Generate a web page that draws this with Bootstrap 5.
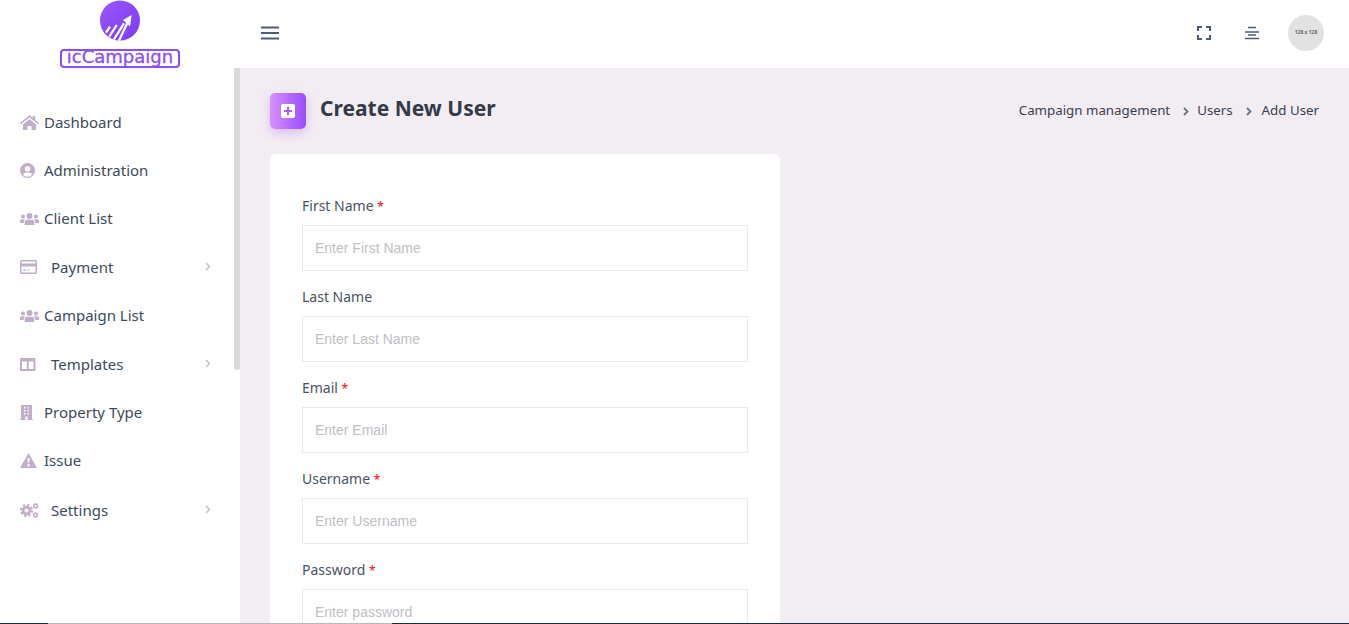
<!DOCTYPE html>
<html lang="en">
<head>
  <meta charset="UTF-8">
  <title>Create New User</title>
  <link href="https://cdn.jsdelivr.net/npm/bootstrap@5.3.0/dist/css/bootstrap.min.css" rel="stylesheet">
  <style>
    html, body { height: 100%; overflow: hidden; }
    body { font-family: "Noto Sans", "Open Sans", sans-serif; color: #3d4a5c; background: #f2ecf3; }
    .topbar { height: 68px; background: #fff; padding-bottom: 2px; }
    .brand-box { width: 240px; }
    .brand-name { font-family: "DejaVu Sans", sans-serif; font-size: 18px; line-height: 11px; height: 19px; color: #8a4dfb; -webkit-text-stroke: .3px #8a4dfb; border: 2px solid #8a4dfb; border-radius: 4px; width: 120px; text-align: center; margin-top: 8px; }
    .burger { margin-left: 21px; color: #4f5b7c; }
    .head-icon { color: #4f5b7c; }
    .head-icon-mid { margin: 0 29px 0 34px; }
    .avatar-blank { width: 36px; height: 36px; border-radius: 50%; background: #e2e2e2; color: #666; font-size: 5px; font-weight: 700; margin-right: 25px; }
    .side-menu { width: 240px; height: 556px; background: #fff; padding-top: 30px; position: relative; }
    .side-item { height: 48px; padding-left: 20px; padding-right: 29px; color: #3d4a5c; font-size: 15px; text-decoration: none; }
    .side-item-sub { height: 49px; padding-top: 1px; }
    .side-item-last { margin-top: 1px; }
    .side-item svg.ico { color: #c3aec9; flex: none; }
    .side-chev { margin-top: -2px; }
    .side-label { margin-left: 5px; }
    .side-label-sub { margin-left: 12px; }
    .side-thumb { position: absolute; right: 0; top: 0; width: 6px; height: 302px; background: #d7d9dc; border-radius: 0 0 3px 3px; }
    .content-area { padding: 25px 30px 0; }
    .page-badge { width: 36px; height: 36px; border-radius: 5px; background: linear-gradient(90deg, #d78fff, #9a4dff); box-shadow: 0 4px 10px rgba(168, 85, 247, .3); }
    .page-title { font-size: 21px; font-weight: 700; color: #343a46; margin: 0 0 6px 14px; line-height: 30px; }
    .crumbs { font-size: 13.3px; color: #3a3f4d; }
    .crumbs svg { color: #6c7280; margin: 0 8px 0 13px; }
    .crumbs svg:last-of-type { margin-right: 10px; }
    .form-panel { width: 510px; background: #fff; border-radius: 6px; padding: 40px 32px 0; margin-top: 25px; }
    .field-label { font-size: 14px; color: #4a5262; line-height: 24px; margin-bottom: 7px; display: block; }
    .field-label b { color: #f00; font-weight: 400; font-size: 12px; line-height: 1; }
    .field-input { height: 46px; border: 1px solid #e8e8ef; border-radius: 0; font-family: "Liberation Sans", sans-serif; font-size: 14px; padding: 0 12px; margin-bottom: 14px; }
    .field-input::placeholder { color: #c0c0c4; }
    .edge-line { position: fixed; left: 0; right: 0; bottom: 0; height: 1px; background: #1f2d3a; }
    .edge-line i { display: block; margin-left: 48px; width: 344px; height: 1px; background: #b8b8b8; }
  </style>
</head>
<body>
<div class="topbar d-flex align-items-center">
  <div class="brand-box d-flex flex-column align-items-center align-self-start">
    <svg width="40" height="41" viewBox="0 0 40 41">
      <defs><linearGradient id="lg" x1="0" y1="0" x2="1" y2="1"><stop offset="0" stop-color="#9a55fb"/><stop offset="1" stop-color="#7a3df5"/></linearGradient></defs>
      <circle cx="20" cy="20.500" r="20" fill="url(#lg)"/>
      <path d="M6 32.700l4-6M9.300 36.700L16.700 25M14 39.300l10-16M19 40.500l10-21" stroke="#fff" stroke-width="2.200" fill="none"/>
      <path d="M31.600 15L23 20l7 6.600z" fill="#fff"/>
    </svg>
    <div class="brand-name">icCampaign</div>
  </div>
  <svg class="burger" width="18" height="14" viewBox="0 0 18 14"><path d="M0 1.500h18M0 7h18M0 12.500h18" stroke="currentColor" stroke-width="2"/></svg>
  <div class="ms-auto d-flex align-items-center">
    <svg class="head-icon" width="14" height="14" viewBox="0 0 14 14"><path d="M1 5V1h4M9 1h4v4M13 9v4H9M5 13H1V9" fill="none" stroke="currentColor" stroke-width="2"/></svg>
    <svg class="head-icon head-icon-mid" width="14" height="14" viewBox="0 0 14 14"><path d="M3 1.500h8M0 6h14M3 9h8M0 12.500h14" stroke="currentColor" stroke-width="1.700"/></svg>
    <div class="avatar-blank d-flex align-items-center justify-content-center">128 x 128</div>
  </div>
</div>
<div class="d-flex">
  <nav class="side-menu flex-shrink-0">
    <div class="side-thumb"></div>
    <a href="#" class="side-item d-flex align-items-center">
      <svg class="ico" width="19" height="15" viewBox="0 0 19 15"><path fill="currentColor" d="M9.500 0l3.300 2.800V1h2.500v3.900L19 8l-1 1.200-8.500-7-8.500 7L0 8zM3 9.500l6.500-5.500L16 9.500V15h-4.500v-4h-4v4H3z"/></svg>
      <span class="side-label">Dashboard</span>
    </a>
    <a href="#" class="side-item d-flex align-items-center">
      <svg class="ico" width="19" height="15" viewBox="0 0 19 15"><path fill="currentColor" fill-rule="evenodd" d="M7.500 0a7.500 7.500 0 1 1 0 15a7.500 7.500 0 0 1 0-15zM7.500 3a2.700 2.700 0 1 0 0 5.400a2.700 2.700 0 0 0 0-5.400zM2.900 11.500a5.800 5.800 0 0 0 9.200 0c-.8-1.300-2-2-3.300-2h-2.600c-1.300 0-2.500.7-3.300 2z"/></svg>
      <span class="side-label">Administration</span>
    </a>
    <a href="#" class="side-item d-flex align-items-center">
      <svg class="ico" width="19" height="13" viewBox="0 0 19 13"><path fill="currentColor" d="M9.500 1a3 3 0 1 1 0 6a3 3 0 0 1 0-6zM3 2.500a2 2 0 1 1 0 4a2 2 0 0 1 0-4zM16 2.500a2 2 0 1 1 0 4a2 2 0 0 1 0-4zM0 11V9c0-1 .8-1.800 2-1.800h2c.3 0 .7.100 1 .3C4.200 8.300 3.700 9.500 3.700 11zM19 11V9c0-1-.8-1.800-2-1.800h-2c-.3 0-.7.100-1 .3c.8.800 1.300 2 1.300 3.500zM7 7.700h5c1.300 0 2.300 1 2.300 2.300v3H4.700v-3c0-1.300 1-2.300 2.300-2.300z"/></svg>
      <span class="side-label">Client List</span>
    </a>
    <a href="#" class="side-item side-item-sub d-flex align-items-center">
      <svg class="ico" width="19" height="14" viewBox="0 0 19 14"><path fill="currentColor" fill-rule="evenodd" d="M1.500 0h14A1.500 1.500 0 0 1 17 1.500v11a1.500 1.500 0 0 1-1.500 1.500h-14A1.500 1.500 0 0 1 0 12.500v-11A1.500 1.500 0 0 1 1.500 0zM1.500 1.500V3.500h14V1.500zM1.500 6.500v6h14v-6zM3 9.500h3v1.300H3zM7.500 9.500h2v1.300h-2z"/></svg>
      <span class="side-label-sub">Payment</span>
      <svg class="side-chev ms-auto" width="6" height="9" viewBox="0 0 6 9"><path d="M1 1l3.500 3.500L1 8" fill="none" stroke="#c6b8cb" stroke-width="1.300"/></svg>
    </a>
    <a href="#" class="side-item d-flex align-items-center">
      <svg class="ico" width="19" height="13" viewBox="0 0 19 13"><path fill="currentColor" d="M9.500 1a3 3 0 1 1 0 6a3 3 0 0 1 0-6zM3 2.500a2 2 0 1 1 0 4a2 2 0 0 1 0-4zM16 2.500a2 2 0 1 1 0 4a2 2 0 0 1 0-4zM0 11V9c0-1 .8-1.800 2-1.800h2c.3 0 .7.100 1 .3C4.200 8.300 3.700 9.500 3.700 11zM19 11V9c0-1-.8-1.800-2-1.800h-2c-.3 0-.7.100-1 .3c.8.800 1.300 2 1.300 3.500zM7 7.700h5c1.300 0 2.300 1 2.300 2.300v3H4.700v-3c0-1.300 1-2.300 2.300-2.300z"/></svg>
      <span class="side-label">Campaign List</span>
    </a>
    <a href="#" class="side-item side-item-sub d-flex align-items-center">
      <svg class="ico" width="19" height="13" viewBox="0 0 19 13"><path fill="currentColor" fill-rule="evenodd" d="M0 0h15.500v13H0zM2 3.500V11h4.800V3.500zM8.700 3.500V11h4.800V3.500z"/></svg>
      <span class="side-label-sub">Templates</span>
      <svg class="side-chev ms-auto" width="6" height="9" viewBox="0 0 6 9"><path d="M1 1l3.500 3.500L1 8" fill="none" stroke="#c6b8cb" stroke-width="1.300"/></svg>
    </a>
    <a href="#" class="side-item d-flex align-items-center">
      <svg class="ico" width="19" height="15" viewBox="0 0 19 15"><path fill="currentColor" fill-rule="evenodd" d="M1 0h11v14h1v1H0v-1h1zM4 2v1.500h1.500V2zM7.500 2v1.500H9V2zM4 5v1.500h1.500V5zM7.500 5v1.500H9V5zM4 8v1.500h1.500V8zM7.500 8v1.500H9V8zM5.500 11.500V15h2v-3.500z"/></svg>
      <span class="side-label">Property Type</span>
    </a>
    <a href="#" class="side-item d-flex align-items-center">
      <svg class="ico" width="19" height="15" viewBox="0 0 19 15"><path fill="currentColor" fill-rule="evenodd" d="M8.500 0l8.500 15H0zM7.500 5l.4 5h1.200l.4-5zM8.500 11a1.200 1.200 0 1 0 0 2.400a1.200 1.200 0 0 0 0-2.400z"/></svg>
      <span class="side-label">Issue</span>
    </a>
    <a href="#" class="side-item side-item-sub side-item-last d-flex align-items-center">
      <svg class="ico" width="19" height="15" viewBox="0 0 19 15"><g fill="none" stroke="currentColor"><circle cx="6.500" cy="7.500" r="3.400" stroke-width="2.800"/><circle cx="6.500" cy="7.500" r="5.500" stroke-width="2.200" stroke-dasharray="2.200 2.120"/><circle cx="15.500" cy="3" r="1.900" stroke-width="1.700"/><circle cx="15.500" cy="12" r="1.900" stroke-width="1.700"/></g></svg>
      <span class="side-label-sub">Settings</span>
      <svg class="side-chev ms-auto" width="6" height="9" viewBox="0 0 6 9"><path d="M1 1l3.500 3.500L1 8" fill="none" stroke="#c6b8cb" stroke-width="1.300"/></svg>
    </a>
  </nav>
  <main class="content-area flex-grow-1">
    <div class="d-flex align-items-center">
      <div class="page-badge d-flex align-items-center justify-content-center">
        <svg width="14" height="14" viewBox="0 0 14 14"><rect width="14" height="14" rx="2" fill="#fff"/><path d="M7 3v8M3 7h8" stroke="#b05cff" stroke-width="2"/></svg>
      </div>
      <h1 class="page-title">Create New User</h1>
      <div class="crumbs ms-auto d-flex align-items-center">
        <span>Campaign management</span>
        <svg width="6" height="9" viewBox="0 0 6 9"><path d="M1 1l3.500 3.500L1 8" fill="none" stroke="currentColor" stroke-width="1.800"/></svg>
        <span>Users</span>
        <svg width="6" height="9" viewBox="0 0 6 9"><path d="M1 1l3.500 3.500L1 8" fill="none" stroke="currentColor" stroke-width="1.800"/></svg>
        <span>Add User</span>
      </div>
    </div>
    <form class="form-panel">
      <label class="field-label">First Name <b>*</b></label>
      <input type="text" class="form-control field-input" placeholder="Enter First Name">
      <label class="field-label">Last Name</label>
      <input type="text" class="form-control field-input" placeholder="Enter Last Name">
      <label class="field-label">Email <b>*</b></label>
      <input type="text" class="form-control field-input" placeholder="Enter Email">
      <label class="field-label">Username <b>*</b></label>
      <input type="text" class="form-control field-input" placeholder="Enter Username">
      <label class="field-label">Password <b>*</b></label>
      <input type="password" class="form-control field-input" placeholder="Enter password">
    </form>
  </main>
</div>
<div class="edge-line"><i></i></div>
<script src="https://cdn.jsdelivr.net/npm/bootstrap@5.3.0/dist/js/bootstrap.bundle.min.js"></script>
</body>
</html>
